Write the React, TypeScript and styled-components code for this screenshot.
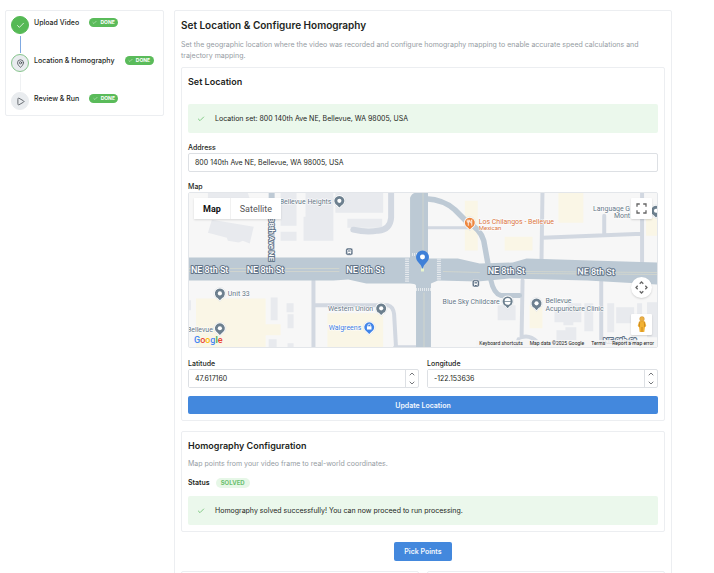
import React, { useState } from "react";
import styled, { createGlobalStyle, css } from "styled-components";
import { Check, ChevronDown, ChevronUp, MapPin, Play } from "lucide-react";

const GlobalStyle = createGlobalStyle`
  *, *::before, *::after { box-sizing: border-box; }
  html, body { margin: 0; background: #fff; }
  body { font-family: Inter, "Liberation Sans", sans-serif; font-size: 7px; line-height: 11px; color: #1d1f22; }
  h1, h2, p, ol { margin: 0; padding: 0; }
  button, input { font-family: inherit; }
`;

const Page = styled.div`
  height: 100vh;
  overflow: hidden auto;
  scrollbar-width: none;
  display: grid;
  grid-template-columns: 159px minmax(0, 1fr);
  column-gap: 10px;
  align-items: start;
  padding: 10px 42px 0 5px;
`;

const card = css`
  border: 1px solid #eceef1;
  border-radius: 2px;
  background: #fff;
`;

const Sidebar = styled.nav`
  ${card}
  padding: 5px;
`;

const Steps = styled.ol`
  list-style: none;
  display: flex;
  flex-direction: column;
`;

const Step = styled.li`
  display: grid;
  grid-template-columns: 18px 1fr;
  column-gap: 5px;
  min-height: 38px;
  &:last-child { min-height: 18px; }
`;

const StepRail = styled.div`
  display: flex;
  flex-direction: column;
  align-items: center;
`;

type Stage = "done" | "active" | "idle";

const StepDot = styled.span<{ $stage: Stage }>`
  display: grid;
  place-items: center;
  width: 18px;
  height: 18px;
  border-radius: 50%;
  color: ${(p) => (p.$stage === "done" ? "#fff" : "#3d4349")};
  background: ${(p) => (p.$stage === "done" ? "#55b955" : "#e9ecef")};
  border: 1px solid ${(p) => (p.$stage === "done" ? "#55b955" : p.$stage === "active" ? "#86c48c" : "#e9ecef")};
`;

const StepLine = styled.span<{ $filled: boolean }>`
  width: 1px;
  height: 17px;
  margin-top: 2px;
  background: ${(p) => (p.$filled ? "#7fa9e2" : "#eff1f3")};
`;

const StepLabel = styled.div`
  display: flex;
  align-items: center;
  gap: 10px;
  height: 12px;
  font-weight: 500;
  white-space: nowrap;
`;

const DoneBadge = styled.span`
  display: inline-flex;
  align-items: center;
  justify-content: center;
  gap: 3px;
  width: 29px;
  height: 9px;
  border-radius: 5px;
  background: #5abb5a;
  color: #fff;
  font-size: 5px;
  font-weight: 700;
`;

const Main = styled.main`
  ${card}
  padding: 6px;
  display: flex;
  flex-direction: column;
`;

const Title = styled.h1`
  font-size: 10px;
  line-height: 16px;
  font-weight: 600;
  margin-bottom: 6px;
`;

const Muted = styled.p`
  color: #959ca3;
  line-height: 11px;
`;

const Panel = styled.section`
  ${card}
  margin-top: 6px;
  padding: 6px;
`;

const NextPanel = styled(Panel)`
  margin-top: 10px;
`;

const Heading = styled.h2<{ $spaced?: boolean }>`
  font-size: 9px;
  line-height: 16px;
  font-weight: 600;
  margin-bottom: ${(p) => (p.$spaced ? 4 : 0)}px;
`;

const Alert = styled.div<{ $gap: number }>`
  display: flex;
  align-items: center;
  gap: 10px;
  height: 29px;
  margin-top: ${(p) => p.$gap}px;
  padding: 0 9px;
  border-radius: 2px;
  background: #ebf8ec;
  svg { color: #4fb353; }
`;

const Label = styled.label`
  display: block;
  font-weight: 500;
  line-height: 10px;
`;

const Field = styled.div`
  margin-top: 10px;
`;

const inputText = css`
  font-size: 7px;
  line-height: 11px;
  color: #1d1f22;
  padding: 0 6px;
  height: 19px;
  background: #fff;
`;

const TextInput = styled.input`
  ${inputText}
  display: block;
  width: 100%;
  border: 1px solid #dde0e4;
  border-radius: 2px;
`;

const Columns = styled.div`
  display: grid;
  grid-template-columns: 1fr 1fr;
  gap: 8px;
`;

const CoordinateFields = styled(Columns)`
  margin-top: 1px;
`;

const NumberBox = styled.div`
  display: flex;
  height: 19px;
  border: 1px solid #dde0e4;
  border-radius: 2px;
`;

const NumberInput = styled.input`
  ${inputText}
  flex: 1;
  min-width: 0;
  height: 17px;
  border: 0;
`;

const Stepper = styled.div`
  display: grid;
  grid-template-rows: 1fr 1fr;
  width: 13px;
  border-left: 1px solid #dde0e4;
`;

const StepperButton = styled.button`
  display: grid;
  place-items: center;
  padding: 0;
  border: 0;
  background: none;
  color: #30343a;
`;

const PrimaryButton = styled.button<{ $wide?: boolean }>`
  display: block;
  width: ${(p) => (p.$wide ? "100%" : "auto")};
  height: ${(p) => (p.$wide ? 18 : 19)}px;
  margin-top: ${(p) => (p.$wide ? 8 : 10)}px;
  align-self: center;
  padding: 0 10px;
  border: 0;
  border-radius: 2px;
  background: #4388dd;
  color: #f4f8fe;
  font-size: 7px;
  font-weight: 600;
`;

const StatusRow = styled.div`
  display: flex;
  align-items: center;
  gap: 6px;
  height: 11px;
  margin-top: 8px;
  font-weight: 600;
`;

const SolvedBadge = styled.span`
  padding: 0 5px;
  border-radius: 5px;
  line-height: 10px;
  background: #e6f7e7;
  color: #6abf6e;
  font-size: 6px;
  font-weight: 700;
`;

const BottomCard = styled.div`
  ${card}
  height: 12px;
`;

const BottomCards = styled(Columns)`
  margin-top: 10px;
`;

const MapFrame = styled.div`
  position: relative;
  height: 156px;
  overflow: hidden;
  border: 1px solid #e3e6ea;
  border-radius: 2px;
  background: #f7f7f7;
  font-family: Roboto, "Liberation Sans", sans-serif;
`;

const MapDrawing = styled.svg`
  display: block;
  width: 100%;
  height: 100%;
`;

const MapTypes = styled.div`
  position: absolute;
  left: 5px;
  top: 5px;
  display: flex;
  height: 21px;
  background: #fff;
  box-shadow: 0 1px 2px rgba(0, 0, 0, 0.12);
`;

const MapType = styled.button<{ $on?: boolean }>`
  padding: 0 9px;
  border: 0;
  border-right: ${(p) => (p.$on ? "1px solid #f1f1f1" : "0")};
  background: none;
  font-size: 9px;
  font-weight: ${(p) => (p.$on ? 700 : 400)};
  color: ${(p) => (p.$on ? "#111" : "#565656")};
`;

const MapControl = styled.button<{ $round?: boolean }>`
  display: grid;
  place-items: center;
  width: 21px;
  height: 21px;
  padding: 0;
  border: 0;
  border-radius: ${(p) => (p.$round ? "50%" : "1px")};
  background: #fff;
  color: #666;
  box-shadow: 0 1px 2px rgba(0, 0, 0, 0.15);
`;

const MapControls = styled.div`
  position: absolute;
  right: 5px;
  top: 5px;
  bottom: 12px;
  display: flex;
  flex-direction: column;
  gap: 16px;
  > :first-child { margin-bottom: auto; }
`;

const MapFooter = styled.div`
  position: absolute;
  right: 0;
  bottom: 0;
  display: flex;
  gap: 7px;
  padding: 0 3px;
  line-height: 7px;
  font-size: 5px;
  color: #222;
  background: rgba(245, 245, 245, 0.85);
  a { color: inherit; text-decoration: none; }
`;

const FooterButton = styled.button`
  padding: 0;
  border: 0;
  background: none;
  font-size: 5px;
  line-height: 7px;
  color: inherit;
`;

const GoogleMark = styled.div`
  position: absolute;
  left: 5px;
  bottom: 0;
  font-size: 9px;
  line-height: 13px;
  font-weight: 500;
`;

const Letter = styled.span<{ $c: string }>`
  color: ${(p) => p.$c};
`;

const PlaceText = styled.text<{ $c?: string; $small?: boolean }>`
  font-size: ${(p) => (p.$small ? 6 : 7)}px;
  fill: ${(p) => p.$c ?? "#657686"};
  stroke: #fff;
  stroke-width: 1px;
  paint-order: stroke fill;
`;

const StreetText = styled.text<{ $small?: boolean }>`
  font-size: ${(p) => (p.$small ? 8 : 9)}px;
  font-weight: 500;
  fill: #fff;
  stroke: #64768a;
  stroke-width: 2px;
  stroke-linejoin: round;
  paint-order: stroke fill;
`;

function Pin({ x, y, color = "#6d808f", children }: { x: number; y: number; color?: string; children?: React.ReactNode }) {
  return (
    <g transform={`translate(${x} ${y})`}>
      <path d="M0 8.200L-3 5.200A6 6 0 1 1 3 5.200Z" fill="#fff" stroke="#c5ccd3" strokeWidth=".3" />
      <path d="M0 6.800L-2.300 4.500A5 5 0 1 1 2.300 4.500Z" fill={color} />
      {children ?? <circle r="2.100" fill="#fff" />}
    </g>
  );
}

function BusStop({ x, y }: { x: number; y: number }) {
  return (
    <g transform={`translate(${x} ${y})`}>
      <rect x="-3.600" y="-3.600" width="7.200" height="7.200" rx="2" fill="#53677c" stroke="#fff" strokeWidth=".6" />
      <rect x="-2" y="-2.200" width="4" height="3.800" rx=".8" fill="#fff" />
      <path d="M-1.300-1.200H1.300V0H-1.300Z" fill="#53677c" />
      <path d="M-1.400 1.400V2.400M1.400 1.400V2.400" stroke="#fff" strokeWidth=".8" />
    </g>
  );
}

function MapScene() {
  return (
    <MapDrawing viewBox="0 0 470 155" preserveAspectRatio="xMidYMid slice" role="img" aria-label="Street map around NE 8th St">
      <rect width="470" height="155" fill="#f7f7f7" />
      <g fill="#faf6e6">
        <path d="M7 106H77V132H92V143H77V155H7Z M139 121H195V155H139Z M277 8H290V58H277Z M371 0H396V30H371Z M317 44H345V58H317Z M342 113H355V136H342Z M459 25H470V43H459Z" />
      </g>
      <g fill="#e8eaee">
        <path d="M19 0H59L61 6H19Z M23 27L65 34L61 51L54 48L50 50L39 48L38 45L19 40Z" />
        <path d="M92 0H108V33H92Z M92 39H108V48H92Z M117 0H145V48H115V24H117Z M147 0H195V20H147Z M159 26H194V35H159Z" />
        <path d="M82 105H89V128H82Z M98 111H105V120H98Z M99 122H105V136H99Z M80 147H88V155H80Z M99 151H105V155H99Z M0 108H2V118H0Z" />
        <path d="M310 113H328V128H310Z M367 118H380V111H394V130H386V133H376V130H367Z M369 138L378 138V135H389V148H369Z M397 111H406V139H397Z M420 111H427V140H420Z M429 115H447V131H429Z M450 111H455V128H450Z M460 110H470V145H460Z" />
      </g>
      <g fill="none" stroke="#d2d8e1" strokeLinecap="round" strokeLinejoin="round">
        <path d="M203-3V25Q202 37 190 38Q178 40 165 37" strokeWidth="6" />
        <path d="M125 88V157M125 113H200Q205 114 206 122L208 157M207 155H228" strokeWidth="4" />
        <path d="M240 35H282" strokeWidth="3" />
        <path d="M355-2L354 68M355 45L455 41M417 23V41M455-2V70" strokeWidth="4" />
        <path d="M335 88L334 145Q342 142 350 150M331 147L328 157M414 89V157" strokeWidth="4" />
      </g>
      <g fill="none" stroke="#becad5" strokeLinecap="round" strokeLinejoin="round">
        <path d="M238 6Q256 7 267 17L279 29Q293 37 296 48L300 70" strokeWidth="5.500" />
        <path d="M303 87Q306 101 313 103L332 103" strokeWidth="5" />
        <path d="M83-2V68" strokeWidth="6" />
      </g>
      <path fill="#bcc9d4" d="M0 65H222V5Q224 0 228 0H240V66H270L292 71L325 70L339 66L470 70V92L400 88L322 86L290 89L250 88L243 91L243 155H228V93Q227 91 222 91H178L160 87L145 88H0Z" />
      <g stroke="#e5e9ed" fill="none">
        <path d="M219 66V90M251 66V88" strokeWidth="4" strokeDasharray="1.200 1" />
        <path d="M228 97H243M224 62H239" strokeWidth="3" strokeDasharray="1 1" />
      </g>
      <g stroke="#d5d8cd" fill="none" strokeWidth=".8">
        <path d="M0 76H151M0 79H151M255 79L292 80M335 79L470 80M335 81L470 82M235 0V64M236 100V155" />
      </g>
      <StreetText x="2" y="81">NE 8th St</StreetText>
      <StreetText x="58" y="81">NE 8th St</StreetText>
      <StreetText x="158" y="81">NE 8th St</StreetText>
      <StreetText x="300" y="82">NE 8th St</StreetText>
      <StreetText x="390" y="82" transform="rotate(1 390 82)">NE 8th St</StreetText>
      <StreetText $small transform="translate(80 25) rotate(90)">38th Ave NE</StreetText>
      <StreetText $small x="416" y="151">NE 8th St</StreetText>
      <PlaceText x="143" y="11" textAnchor="end">Bellevue Heights</PlaceText>
      <PlaceText x="39" y="104">Unit 33</PlaceText>
      <PlaceText x="24" y="140" textAnchor="end">Bellevue</PlaceText>
      <PlaceText x="185" y="119" textAnchor="end">Western Union</PlaceText>
      <PlaceText x="173" y="138" textAnchor="end" $c="#3d7de0">Walgreens</PlaceText>
      <PlaceText x="312" y="112" textAnchor="end">Blue Sky Childcare</PlaceText>
      <PlaceText x="358" y="111">Bellevue</PlaceText>
      <PlaceText x="358" y="119">Acupuncture Clinic</PlaceText>
      <PlaceText x="291" y="31" $c="#d9743c">Los Chilangos - Bellevue</PlaceText>
      <PlaceText x="291" y="37" $c="#d9743c" $small>Mexican</PlaceText>
      <PlaceText x="443" y="18" textAnchor="end">Language G</PlaceText>
      <PlaceText x="443" y="25" textAnchor="end">Mont</PlaceText>
      <BusStop x={161} y={59} />
      <BusStop x={288} y={91} />
      <Pin x={151} y={8} />
      <Pin x={31} y={101} />
      <Pin x={31} y={136} />
      <Pin x={193} y={116} />
      <Pin x={181} y={135} color="#4285e8">
        <path d="M-2.300-1H2.300V2.300H-2.300Z" fill="#fff" />
        <path d="M-1.300-1V-1.800A1.300 1.300 0 0 1 1.300-1.800V-1" fill="none" stroke="#fff" strokeWidth=".8" />
      </Pin>
      <Pin x={320} y={109}>
        <path d="M-3-.4A3 3 0 0 1 3-.4ZM-3 .5H3A3 3 0 0 1-3 .5Z" fill="#fff" />
      </Pin>
      <Pin x={349} y={111} />
      <Pin x={282} y={30} color="#ed863e">
        <path d="M-1.500-3V3M-2.600-3V-.6H-.4V-3M2 3V-3Q.7-2 .9.3H2" fill="none" stroke="#fff" strokeWidth=".8" />
      </Pin>
      <Pin x={469} y={18} />
      <path d="M234.500 77C233 70 228 70 228 64.500A6.500 6.500 0 0 1 241 64.500C241 70 236 70 234.500 77Z" fill="#3f80d8" />
      <circle cx="234.500" cy="64.500" r="2.500" fill="#fff" />
      <path d="M233 76H236V79H233Z" fill="#e8f4cd" />
    </MapDrawing>
  );
}

function NumberField({ id, label, initial }: { id: string; label: string; initial: string }) {
  const [value, setValue] = useState(initial);
  const nudge = (by: number) => setValue((v) => (Number(v) + by).toFixed(6));
  return (
    <Field>
      <Label htmlFor={id}>{label}</Label>
      <NumberBox>
        <NumberInput id={id} inputMode="decimal" value={value} onChange={(e) => setValue(e.target.value)} />
        <Stepper>
          <StepperButton type="button" aria-label={`Increase ${label}`} onClick={() => nudge(0.000001)}>
            <ChevronUp size={8} />
          </StepperButton>
          <StepperButton type="button" aria-label={`Decrease ${label}`} onClick={() => nudge(-0.000001)}>
            <ChevronDown size={8} />
          </StepperButton>
        </Stepper>
      </NumberBox>
    </Field>
  );
}

const steps: { name: string; stage: Stage; icon: React.ReactNode }[] = [
  { name: "Upload Video", stage: "done", icon: <Check size={9} /> },
  { name: "Location & Homography", stage: "active", icon: <MapPin size={9} /> },
  { name: "Review & Run", stage: "idle", icon: <Play size={9} /> },
];

const googleLetters: [string, string][] = [
  ["G", "#4285f4"],
  ["o", "#ea4335"],
  ["o", "#fbbc05"],
  ["g", "#4285f4"],
  ["l", "#34a853"],
  ["e", "#ea4335"],
];

export default function App() {
  const [address, setAddress] = useState("800 140th Ave NE, Bellevue, WA 98005, USA");
  return (
    <>
      <GlobalStyle />
      <Page>
        <Sidebar aria-label="Progress">
          <Steps>
            {steps.map((s, i) => (
              <Step key={s.name}>
                <StepRail>
                  <StepDot $stage={s.stage}>{s.icon}</StepDot>
                  {i < steps.length - 1 && <StepLine $filled={i === 0} />}
                </StepRail>
                <StepLabel>
                  {s.name}
                  <DoneBadge>
                    <Check size={5} />
                    DONE
                  </DoneBadge>
                </StepLabel>
              </Step>
            ))}
          </Steps>
        </Sidebar>

        <Main>
          <Title>Set Location &amp; Configure Homography</Title>
          <Muted>
            Set the geographic location where the video was recorded and configure homography mapping to enable accurate
            speed calculations and trajectory mapping.
          </Muted>

          <Panel>
            <Heading>Set Location</Heading>
            <Alert $gap={14} role="status">
              <Check size={8} />
              Location set: 800 140th Ave NE, Bellevue, WA 98005, USA
            </Alert>
            <Field>
              <Label htmlFor="address">Address</Label>
              <TextInput id="address" value={address} onChange={(e) => setAddress(e.target.value)} />
            </Field>
            <Field>
              <Label as="div">Map</Label>
              <MapFrame>
                <MapScene />
                <MapTypes>
                  <MapType type="button" $on>Map</MapType>
                  <MapType type="button">Satellite</MapType>
                </MapTypes>
                <MapControls>
                  <MapControl type="button" aria-label="Toggle fullscreen">
                    <svg width="11" height="11" viewBox="0 0 11 11" fill="none" stroke="currentColor" strokeWidth="1.300">
                      <path d="M1 3.800V1H3.800M7.200 1H10V3.800M10 7.200V10H7.200M3.800 10H1V7.200" />
                    </svg>
                  </MapControl>
                  <MapControl type="button" $round aria-label="Map camera controls">
                    <svg width="13" height="13" viewBox="0 0 13 13" fill="none" stroke="currentColor" strokeWidth="1.300">
                      <path d="M4.700 2.700L6.500 1L8.300 2.700M4.700 10.300L6.500 12L8.300 10.300M2.700 4.700L1 6.500L2.700 8.300M10.300 4.700L12 6.500L10.300 8.300" />
                    </svg>
                  </MapControl>
                  <MapControl type="button" aria-label="Street View">
                    <svg width="10" height="17" viewBox="0 0 10 17">
                      <path d="M2 5.500Q5 4 8 5.500L9.300 10L8 11L7.300 16H2.700L2 11L.7 10Z" fill="#f2b234" />
                      <path d="M2.700 6L2.300 11M7.300 6L7.700 11M5 11V16" stroke="#ba7a20" strokeWidth=".7" />
                      <circle cx="5" cy="3" r="2.400" fill="#eab047" stroke="#c98a2c" strokeWidth=".4" />
                    </svg>
                  </MapControl>
                </MapControls>
                <GoogleMark aria-label="Google">
                  {googleLetters.map(([ch, c], i) => (
                    <Letter key={i} $c={c}>{ch}</Letter>
                  ))}
                </GoogleMark>
                <MapFooter>
                  <FooterButton type="button">Keyboard shortcuts</FooterButton>
                  <span>Map data ©2025 Google</span>
                  <a href="#terms">Terms</a>
                  <a href="#report">Report a map error</a>
                </MapFooter>
              </MapFrame>
            </Field>
            <CoordinateFields>
              <NumberField id="latitude" label="Latitude" initial="47.617160" />
              <NumberField id="longitude" label="Longitude" initial="-122.153636" />
            </CoordinateFields>
            <PrimaryButton type="button" $wide>Update Location</PrimaryButton>
          </Panel>

          <NextPanel>
            <Heading $spaced>Homography Configuration</Heading>
            <Muted>Map points from your video frame to real-world coordinates.</Muted>
            <StatusRow>
              Status
              <SolvedBadge>SOLVED</SolvedBadge>
            </StatusRow>
            <Alert $gap={8} role="status">
              <Check size={8} />
              Homography solved successfully! You can now proceed to run processing.
            </Alert>
          </NextPanel>

          <PrimaryButton type="button">Pick Points</PrimaryButton>

          <BottomCards>
            <BottomCard />
            <BottomCard />
          </BottomCards>
        </Main>
      </Page>
    </>
  );
}
